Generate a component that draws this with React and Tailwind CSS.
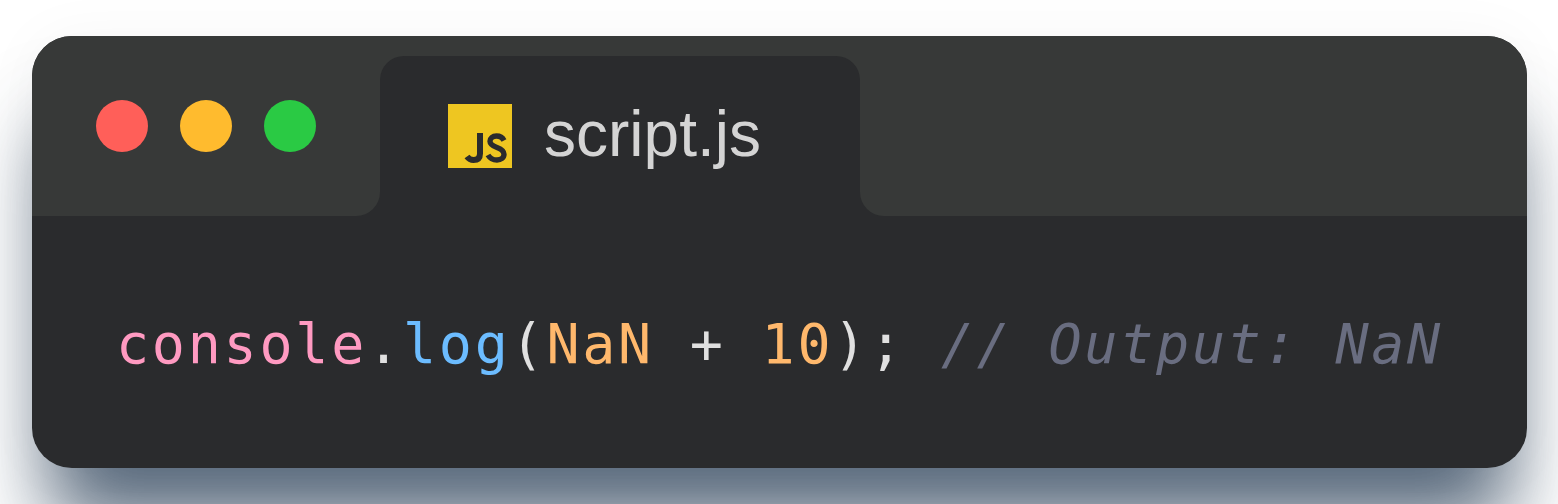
import React from "react";

function JsIcon() {
  return (
    <svg viewBox="0 0 64 64" className="w-[64px] h-[64px] shrink-0">
      <rect width="64" height="64" fill="#eec621" />
      <path d="M32 29V49.5Q32 56 25.5 56Q21.5 56 19 52.5" fill="none" stroke="#2a2b2d" strokeWidth="6" />
      <path d="M56 36.5C54.5 33.5 52 32 48.5 32C44.5 32 42 34.2 42 37.2C42 40.5 45 42 49 43.5C53 45 56 46.8 56 50.3C56 53.8 53 56 49 56C45 56 42 54.5 40 51" fill="none" stroke="#2a2b2d" strokeWidth="5.4" />
    </svg>
  );
}

export default function App() {
  return (
    <div className="w-[1558px] h-[504px] overflow-hidden bg-white pt-[36px] pl-[32px]">
      <div className="w-[1495px] h-[432px] rounded-[40px] bg-[#2a2b2d] shadow-[0_73px_80px_-17px_rgba(34,56,82,0.76),0_0_60px_rgba(30,41,59,0.04)] flex flex-col overflow-hidden">
        <div className="h-[180px] flex shrink-0">
          <div className="w-[348px] bg-[#373938] rounded-br-[24px] flex items-start gap-[31.4px] pt-[64px] pl-[64px]">
            <span className="w-[52.4px] h-[52.4px] rounded-full bg-[#ff5f59]" />
            <span className="w-[52.4px] h-[52.4px] rounded-full bg-[#ffbb2e]" />
            <span className="w-[52.4px] h-[52.4px] rounded-full bg-[#2aca44]" />
          </div>
          <div className="w-[480px] bg-[#373938] pt-[20px] flex">
            <div className="flex-1 bg-[#2a2b2d] rounded-t-[24px] flex items-start pt-[48px] pl-[68px] gap-[32px]">
              <JsIcon />
              <span className="-mt-[2px] font-['Liberation_Sans',Arial,sans-serif] text-[64px] leading-[64px] text-[#d4d4d4]">script.js</span>
            </div>
          </div>
          <div className="flex-1 bg-[#373938] rounded-bl-[24px]" />
        </div>
        <div className="pt-[93px] pl-[84px] font-['DejaVu_Sans_Mono',monospace] text-[55px] tracking-[2.75px] leading-[70px] whitespace-pre text-[#e0e0e0]">
          <span className="text-[#ff9ac1]">console</span>
          <span>.</span>
          <span className="text-[#6cbcff]">log</span>
          <span>(</span>
          <span className="text-[#ffb86c]">NaN</span>
          <span> + </span>
          <span className="text-[#ffb86c]">10</span>
          <span>); </span>
          <span className="italic text-[#696d80]">// Output: NaN</span>
        </div>
      </div>
    </div>
  );
}
